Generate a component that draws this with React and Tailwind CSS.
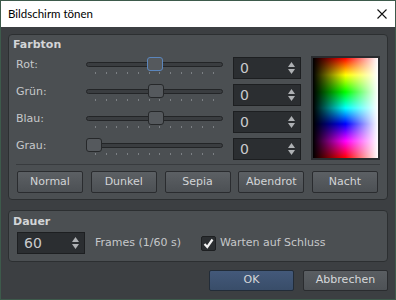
import React from 'react';

const ui = { fontFamily: '"DejaVu Sans", "Noto Sans", sans-serif' };

const Spin = ({ value, className = '' }) => (
    <div className={`flex h-[22px] w-[68px] items-center justify-between border border-[#1d1f21] bg-[#2b2e31] pl-[6px] pr-[5px] ${className}`}>
        <span className="text-[14px] leading-none text-[#c9cbcd]">{value}</span>
        <div className="flex flex-col items-center gap-[2px]">
            <svg width="7" height="5" viewBox="0 0 7 5"><path d="M3.5 0L7 5H0z" fill="#aeb1b4" /></svg>
            <svg width="7" height="5" viewBox="0 0 7 5"><path d="M0 0h7L3.5 5z" fill="#aeb1b4" /></svg>
        </div>
    </div>
);

const Slider = ({ pos, focused }) => (
    <div className="relative h-[22px] w-[137px]">
        <div className="absolute left-0 right-0 top-[5px] h-[5px] rounded-full border border-[#232527] bg-[#3a3d40]" />
        <div
            className={`absolute top-0 h-[14px] w-[16px] rounded-[3px] border bg-[#55595d] ${focused ? 'border-[#5b86bd]' : 'border-[#26282a]'}`}
            style={{ left: pos }}
        />
        <div className="absolute left-[9px] top-[15px] flex w-[119px] justify-between">
            {Array.from({ length: 12 }).map((_, i) => (
                <span key={i} className="h-[2px] w-px bg-[#7c8084]" />
            ))}
        </div>
    </div>
);

const Button = ({ children, className = '' }) => (
    <button className={`flex h-[22px] w-[66px] items-center justify-center rounded-[2px] border border-[#2a2c2f] bg-[linear-gradient(#5c6064,#4c5054)] text-[11px] text-[#d2d4d6] ${className}`}>
        {children}
    </button>
);

export default function App() {
    const rows = [
        { label: 'Rot:', pos: 61, focused: true },
        { label: 'Grün:', pos: 62 },
        { label: 'Blau:', pos: 62 },
        { label: 'Grau:', pos: 0 },
    ];

    return (
        <div className="flex h-[300px] w-[396px] flex-col border border-[#3d5a4b] bg-[#3c3f42]" style={ui}>
            {/* title bar */}
            <div className="flex h-[26px] shrink-0 items-center justify-between bg-white pl-[7px] pr-[8px]">
                <span className="text-[11.5px] text-black" style={{ fontFamily: 'Lato, "Noto Sans", sans-serif' }}>Bildschirm tönen</span>
                <svg width="10" height="10" viewBox="0 0 10 10"><path d="M0.5 0.5l9 9M9.5 0.5l-9 9" stroke="#111" strokeWidth="1.1" /></svg>
            </div>

            <div className="flex flex-col px-[7px] pt-[7px]">
                {/* Farbton */}
                <div className="flex h-[166px] flex-col rounded-[4px] border border-[#2c2f31] bg-[#4b4f52]">
                    <div className="pl-[4px] pt-[3px] text-[11px] font-bold leading-[14px] text-[#d3d5d7]">Farbton</div>
                    <div className="mt-[4px] flex h-[104px]">
                        <div className="flex flex-col gap-[5px] pt-[1px]">
                            {rows.map(r => (
                                <div key={r.label} className="flex h-[22px] items-start">
                                    <span className="w-[77px] pl-[7px] pt-[1px] text-[11px] leading-[14px] text-[#c6c8ca]">{r.label}</span>
                                    <Slider pos={r.pos} focused={r.focused} />
                                    <Spin value="0" className="ml-[10px]" />
                                </div>
                            ))}
                        </div>
                        <div className="ml-[10px] h-[104px] w-[69px] border-2 border-[#2a2c2f] bg-[linear-gradient(to_right,#000,rgba(0,0,0,0)_50%,rgba(255,255,255,0)_50%,#fff),linear-gradient(to_bottom,#f00,#ff0_17%,#0f0_34%,#0ff_50%,#00f_66%,#f0f_83%,#f00)]" />
                    </div>
                    <div className="ml-[7px] mt-[4px] h-px w-[364px] bg-[#383b3e]" />
                    <div className="mt-[6px] flex w-[369px] justify-between pl-[8px]">
                        <Button>Normal</Button>
                        <Button>Dunkel</Button>
                        <Button>Sepia</Button>
                        <Button>Abendrot</Button>
                        <Button>Nacht</Button>
                    </div>
                </div>

                {/* Dauer */}
                <div className="mt-[10px] flex h-[52px] flex-col rounded-[4px] border border-[#2c2f31] bg-[#4b4f52]">
                    <div className="pl-[4px] pt-[4px] text-[11px] font-bold leading-[14px] text-[#d3d5d7]">Dauer</div>
                    <div className="mt-[3px] flex items-center pl-[8px]">
                        <Spin value="60" />
                        <span className="ml-[10px] w-[106px] text-[11px] text-[#c6c8ca]">Frames (1/60 s)</span>
                        <div className="flex h-[15px] w-[15px] items-center justify-center rounded-[2px] border border-[#1d1f21] bg-[#2b2e31]">
                            <svg width="11" height="11" viewBox="0 0 11 11"><path d="M1.5 6l2.8 3L9.5 1.5" fill="none" stroke="#f2f2f2" strokeWidth="2.2" /></svg>
                        </div>
                        <span className="ml-[4px] text-[11px] text-[#c6c8ca]">Warten auf Schluss</span>
                    </div>
                </div>

                {/* dialog buttons */}
                <div className="mt-[8px] flex justify-end gap-[9px]">
                    <button className="h-[21px] w-[85px] rounded-[2px] border border-[#222c38] bg-[linear-gradient(#43597a,#394d69)] text-[11px] text-[#d6d8da]">OK</button>
                    <button className="h-[21px] w-[85px] rounded-[2px] border border-[#2a2c2f] bg-[linear-gradient(#5a5e62,#4e5256)] text-[11px] text-[#d6d8da]">Abbrechen</button>
                </div>
            </div>
        </div>
    );
}
